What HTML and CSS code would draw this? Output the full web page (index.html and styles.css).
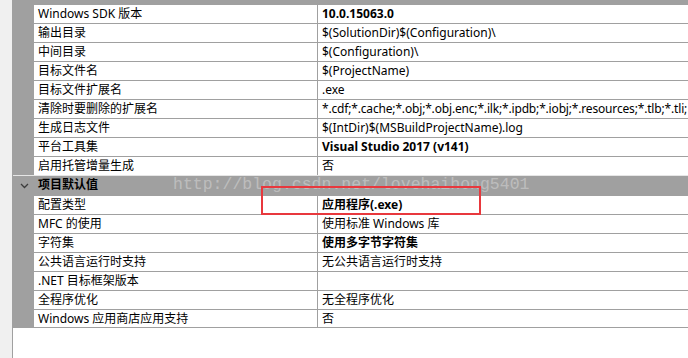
FILE: index.html
```html
<!DOCTYPE html>
<html lang="zh-CN">
<head>
<meta charset="utf-8">
<title>属性页</title>
<link rel="stylesheet" href="styles.css">
</head>
<body>
<div class="page">
  <div class="strip"></div>
  <div class="main">
    <div class="grid">
      <div class="cat-cut"></div>
      <div class="row"><div class="gut"></div><div class="name">Windows SDK 版本</div><div class="val b">10.0.15063.0</div></div>
      <div class="row"><div class="gut"></div><div class="name">输出目录</div><div class="val">$(SolutionDir)$(Configuration)\</div></div>
      <div class="row"><div class="gut"></div><div class="name">中间目录</div><div class="val">$(Configuration)\</div></div>
      <div class="row"><div class="gut"></div><div class="name">目标文件名</div><div class="val">$(ProjectName)</div></div>
      <div class="row"><div class="gut"></div><div class="name">目标文件扩展名</div><div class="val">.exe</div></div>
      <div class="row"><div class="gut"></div><div class="name">清除时要删除的扩展名</div><div class="val tight">*.cdf;*.cache;*.obj;*.obj.enc;*.ilk;*.ipdb;*.iobj;*.resources;*.tlb;*.tli;</div></div>
      <div class="row"><div class="gut"></div><div class="name">生成日志文件</div><div class="val">$(IntDir)$(MSBuildProjectName).log</div></div>
      <div class="row"><div class="gut"></div><div class="name">平台工具集</div><div class="val b">Visual Studio 2017 (v141)</div></div>
      <div class="row"><div class="gut"></div><div class="name">启用托管增量生成</div><div class="val">否</div></div>
      <div class="cat">
        <div class="gut"><svg class="chev" width="9" height="6" viewBox="0 0 9 6"><path d="M1 1 L4.5 4.5 L8 1" fill="none" stroke="#3c3c3c" stroke-width="1.3"/></svg></div>
        <div class="cat-name">项目默认值</div>
      </div>
      <div class="row"><div class="gut"></div><div class="name">配置类型</div><div class="val b">应用程序(.exe)</div></div>
      <div class="row"><div class="gut"></div><div class="name">MFC 的使用</div><div class="val">使用标准 Windows 库</div></div>
      <div class="row"><div class="gut"></div><div class="name">字符集</div><div class="val b">使用多字节字符集</div></div>
      <div class="row"><div class="gut"></div><div class="name">公共语言运行时支持</div><div class="val">无公共语言运行时支持</div></div>
      <div class="row"><div class="gut"></div><div class="name">.NET 目标框架版本</div><div class="val"></div></div>
      <div class="row"><div class="gut"></div><div class="name">全程序优化</div><div class="val">无全程序优化</div></div>
      <div class="row last"><div class="gut"></div><div class="name">Windows 应用商店应用支持</div><div class="val">否</div></div>
    </div>
  </div>
  <div class="watermark">http://blog.csdn.net/lovehaihong5401</div>
  <div class="redbox"></div>
</div>
</body>
</html>
```
FILE: styles.css
```css
html, body {
  margin: 0;
  padding: 0;
  background: #ffffff;
}
.page {
  position: relative;
  width: 688px;
  height: 358px;
  display: flex;
  overflow: hidden;
  font-family: "Noto Sans", "Noto Sans CJK SC", sans-serif;
  font-size: 12px;
  color: #000;
}
.strip {
  width: 12px;
  background: #f0f0f0;
  border-right: 1px solid #a0a0a0;
  flex: none;
}
.main {
  flex: 1;
  min-width: 0;
  background: #fff;
}
.grid {
  display: flex;
  flex-direction: column;
}
.cat-cut {
  height: 4px;
  background: #a0a0a0;
}
.row {
  display: flex;
  height: 19px;
}
.gut {
  width: 21px;
  flex: none;
  background: #a0a0a0;
  display: flex;
  align-items: center;
  justify-content: center;
}
.name {
  width: 279px;
  flex: none;
  padding-left: 4px;
  border-top: 1px solid #a0a0a0;
  border-right: 1px solid #a0a0a0;
  line-height: 18px;
  white-space: nowrap;
  overflow: hidden;
}
.val {
  flex: 1;
  min-width: 0;
  padding-left: 4px;
  border-top: 1px solid #a0a0a0;
  line-height: 18px;
  white-space: nowrap;
  overflow: hidden;
}
.val.tight {
  letter-spacing: -0.17px;
}
.row.last .name,
.row.last .val {
  border-bottom: 1px solid #a0a0a0;
}
.b {
  font-weight: 700;
}
.cat {
  display: flex;
  background: #a0a0a0;
  border-top: 1px solid #e6e6e6;
  box-sizing: border-box;
  height: 20px;
}
.cat .gut {
  padding-top: 1px;
}
.cat-name {
  padding-left: 4px;
  font-weight: 700;
  line-height: 18px;
}
.chev {
  display: block;
  margin-left: 2px;
}
.watermark {
  position: absolute;
  left: 173px;
  top: 175px;
  font-family: "Liberation Mono", monospace;
  font-size: 16.5px;
  line-height: 20px;
  color: rgba(235, 235, 235, 0.4);
  white-space: nowrap;
  pointer-events: none;
}
.redbox {
  position: absolute;
  left: 261px;
  top: 186px;
  width: 220px;
  height: 29px;
  box-sizing: border-box;
  border: 2px solid #e8383d;
  pointer-events: none;
}
```
